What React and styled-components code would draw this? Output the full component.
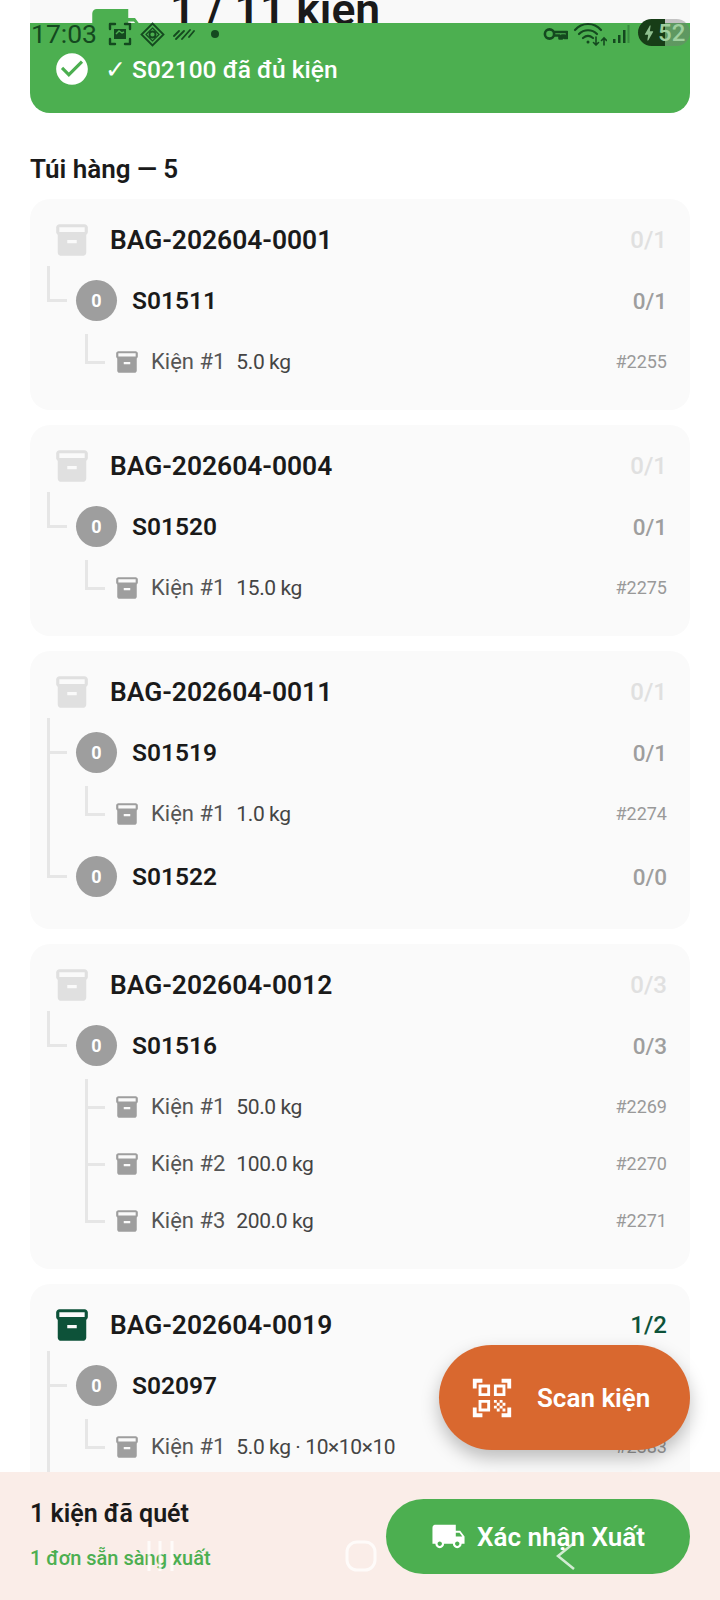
import styled, { createGlobalStyle } from "styled-components"
import { MdInventory2, MdCheckCircle, MdLocalShipping, MdQrCodeScanner, MdBolt } from "react-icons/md"

const bags = [
  {
    code: "BAG-202604-0001", count: "0/1",
    orders: [{ code: "S01511", count: "0/1", parcels: [{ name: "Kiện #1", info: "5.0 kg", id: "#2255" }] }],
  },
  {
    code: "BAG-202604-0004", count: "0/1",
    orders: [{ code: "S01520", count: "0/1", parcels: [{ name: "Kiện #1", info: "15.0 kg", id: "#2275" }] }],
  },
  {
    code: "BAG-202604-0011", count: "0/1",
    orders: [
      { code: "S01519", count: "0/1", parcels: [{ name: "Kiện #1", info: "1.0 kg", id: "#2274" }] },
      { code: "S01522", count: "0/0", parcels: [] },
    ],
  },
  {
    code: "BAG-202604-0012", count: "0/3",
    orders: [
      {
        code: "S01516", count: "0/3",
        parcels: [
          { name: "Kiện #1", info: "50.0 kg", id: "#2269" },
          { name: "Kiện #2", info: "100.0 kg", id: "#2270" },
          { name: "Kiện #3", info: "200.0 kg", id: "#2271" },
        ],
      },
    ],
  },
  {
    code: "BAG-202604-0019", count: "1/2", active: true,
    orders: [
      { code: "S02097", count: "0/1", parcels: [{ name: "Kiện #1", info: "5.0 kg · 10×10×10", id: "#2383" }] },
      { code: "S02100", count: "1/1", parcels: [] },
    ],
  },
]

const GlobalStyle = createGlobalStyle`
  html, body {
    margin: 0;
    padding: 0;
    background: #fff;
  }
  * {
    box-sizing: border-box;
  }
`

const Screen = styled.div`
  position: relative;
  width: 720px;
  height: 1600px;
  overflow: hidden;
  background: #fff;
  font-family: Roboto, "Noto Sans", sans-serif;
  color: #1a1a1a;
`

const Content = styled.main`
  display: flex;
  flex-direction: column;
  padding: 0 30px;
`

const Summary = styled.div`
  display: flex;
  align-items: flex-end;
  gap: 26px;
  height: 23px;
  padding-left: 60px;
  background: #f9f9f9;
  overflow: hidden;
`

const SummaryIcon = styled(MdLocalShipping)`
  flex: none;
  font-size: 54px;
  color: #4caf50;
  margin-bottom: -31px;
`

const SummaryText = styled.div`
  font-size: 44.5px;
  line-height: 52px;
  font-weight: 600;
  white-space: nowrap;
  margin-bottom: -13px;
`

const Toast = styled.div`
  display: flex;
  align-items: flex-start;
  gap: 14px;
  height: 90px;
  padding: 27px 0 0 23px;
  background: #4caf50;
  border-radius: 0 0 20px 20px;
  color: #fff;
  font-size: 24.5px;
  font-weight: 500;
  line-height: 39px;
`

const ToastIcon = styled(MdCheckCircle)`
  flex: none;
  font-size: 38px;
`

const SectionTitle = styled.h2`
  margin: 40px 0 13px;
  font-size: 26px;
  line-height: 33px;
  font-weight: 600;
`

const BagList = styled.div`
  display: flex;
  flex-direction: column;
  gap: 15px;
`

const Bag = styled.section`
  padding: 16px 0 20px;
  background: #fafafa;
  border-radius: 20px;
`

const BagHeader = styled.div`
  display: flex;
  align-items: center;
  height: 50px;
  margin-bottom: 3px;
  padding: 0 23px;
`

const BagIcon = styled(MdInventory2)`
  flex: none;
  font-size: 38px;
  margin-right: 19px;
  color: ${(p) => (p.$active ? "#0d5239" : "#e0e0e0")};
`

const BagCode = styled.div`
  flex: 1;
  font-size: 26.4px;
  font-weight: 600;
`

const BagCount = styled.div`
  font-size: 24px;
  font-weight: 500;
  color: ${(p) => (p.$active ? "#0d5239" : "#e0e0e0")};
`

const OrderBlock = styled.div`
  position: relative;
  & + & {
    margin-top: 2px;
  }
`

const Trunk = styled.span`
  position: absolute;
  left: 17px;
  top: -2px;
  width: 3px;
  height: ${(p) => (p.$last ? "36px" : "calc(100% + 2px)")};
  background: #e6e6e6;
  &::after {
    content: "";
    position: absolute;
    left: 0;
    top: 33px;
    width: 20px;
    height: 3px;
    background: #e6e6e6;
  }
`

const OrderRow = styled.div`
  display: flex;
  align-items: center;
  height: 65px;
  padding: 0 23px 0 46px;
`

const OrderBadge = styled.div`
  flex: none;
  display: flex;
  align-items: center;
  justify-content: center;
  width: 41px;
  height: 41px;
  margin-right: 15px;
  border-radius: 50%;
  background: #9e9e9e;
  color: #fff;
  font-size: 18px;
  font-weight: 700;
`

const OrderCode = styled.div`
  flex: 1;
  font-size: 24.5px;
  font-weight: 600;
`

const OrderCount = styled.div`
  font-size: 22.5px;
  font-weight: 500;
  color: #9e9e9e;
`

const ParcelRow = styled.div`
  position: relative;
  display: flex;
  align-items: center;
  height: 57px;
  padding: 0 23px 0 84px;
`

const Branch = styled.span`
  position: absolute;
  left: 55px;
  top: 1px;
  width: 3px;
  height: ${(p) => (p.$last ? "30px" : "100%")};
  background: #e6e6e6;
  &::after {
    content: "";
    position: absolute;
    left: 0;
    top: 27px;
    width: 20px;
    height: 3px;
    background: #e6e6e6;
  }
`

const ParcelIcon = styled(MdInventory2)`
  flex: none;
  font-size: 26px;
  margin-right: 11px;
  color: #9e9e9e;
`

const ParcelName = styled.span`
  margin-right: 11px;
  font-size: 22px;
  color: #555;
`

const ParcelInfo = styled.span`
  flex: 1;
  font-size: 21px;
  letter-spacing: -0.4px;
  color: #444;
`

const ParcelId = styled.span`
  font-size: 18px;
  color: #999;
`

const ScanButton = styled.button`
  position: absolute;
  right: 30px;
  top: 1345px;
  display: flex;
  align-items: center;
  gap: 22px;
  width: 251px;
  height: 105px;
  padding: 0 0 0 30px;
  border: 0;
  border-radius: 53px;
  background: #d9682f;
  color: #fff;
  font-family: inherit;
  font-size: 26px;
  font-weight: 600;
  box-shadow: 0 8px 18px rgba(0, 0, 0, 0.25);
`

const Footer = styled.footer`
  position: absolute;
  left: 0;
  right: 0;
  bottom: 0;
  display: flex;
  align-items: flex-start;
  justify-content: space-between;
  height: 128px;
  padding: 27px 30px 0;
  background: #faede8;
`

const FooterTitle = styled.div`
  font-size: 25px;
  line-height: 30px;
  font-weight: 600;
`

const FooterNote = styled.div`
  margin-top: 15px;
  font-size: 20px;
  line-height: 28px;
  font-weight: 500;
  color: #4caf50;
`

const ConfirmButton = styled.button`
  display: flex;
  align-items: center;
  justify-content: center;
  gap: 11px;
  width: 304px;
  height: 75px;
  border: 0;
  border-radius: 38px;
  background: #4caf50;
  color: #fff;
  font-family: inherit;
  font-size: 26px;
  font-weight: 600;
`

const StatusBar = styled.div`
  position: absolute;
  left: 31px;
  right: 30px;
  top: 19px;
  display: flex;
  align-items: center;
  height: 27px;
  color: #14491f;
`

const Clock = styled.span`
  font-size: 26.5px;
  line-height: 30px;
  margin: 2px 11px 0 0;
`

const StatusGroup = styled.div`
  display: flex;
  align-items: center;
  gap: ${(p) => p.$gap || 6}px;
  margin-left: ${(p) => (p.$right ? "auto" : "0")};
  padding-top: 3px;
`

const StatusDot = styled.span`
  width: 8px;
  height: 8px;
  margin-left: 8px;
  border-radius: 50%;
  background: currentColor;
`

const Battery = styled.div`
  position: relative;
  display: flex;
  align-items: center;
  width: 52px;
  height: 27px;
  margin: -3px 0 0 3px;
  padding-left: 20px;
  border-radius: 14px;
  background: linear-gradient(90deg, #173d17 0 27px, rgba(120, 120, 120, 0.42) 27px);
  color: #9fd09f;
  font-size: 24px;
  font-weight: 500;
  svg {
    position: absolute;
    left: 1px;
    color: #8fbf8f;
  }
`

const NavOverlay = styled.div`
  position: absolute;
  left: 146px;
  top: 1540px;
  display: flex;
  align-items: center;
  width: 430px;
  height: 32px;
  color: rgba(255, 255, 255, 0.75);
  pointer-events: none;
`

const NavSlot = styled.div`
  display: flex;
  margin-left: ${(p) => p.$offset}px;
`

const ScreenshotIcon = () => (
  <svg width="24" height="24" viewBox="0 0 24 24" fill="none" stroke="currentColor" strokeWidth="2.4">
    <path d="M7 2H2v5M17 2h5v5M7 22H2v-5M17 22h5v-5" strokeLinecap="round" strokeLinejoin="round" />
    <path d="M6 7h12v10H6z" fill="currentColor" stroke="none" />
    <path d="M8 12l3-3 3 2 2-1" stroke="#4caf50" strokeWidth="1.4" />
  </svg>
)

const DiamondIcon = () => (
  <svg width="25" height="25" viewBox="0 0 25 25" fill="none" stroke="currentColor" strokeWidth="1.8">
    <path d="M12.5 1.5l11 11-11 11-11-11z" />
    <circle cx="12.5" cy="12.5" r="3" />
    <path d="M12.5 6l6.5 6.5-6.5 6.5L6 12.5z" strokeWidth="1.2" />
  </svg>
)

const HatchIcon = () => (
  <svg width="22" height="12" viewBox="0 0 22 12" fill="none" stroke="currentColor" strokeWidth="1.8" strokeLinecap="round">
    <path d="M1 8l5-5M3 11l8-8M9 11l8-9M16 9l5-6" />
  </svg>
)

const KeyIcon = () => (
  <svg width="25" height="16" viewBox="0 0 25 16" fill="none" stroke="currentColor" strokeWidth="2.6">
    <circle cx="6.5" cy="8" r="4.6" />
    <path d="M11 6h13v6h-2.5V9.500h-2.500V12.500h-2.500V9.500H11" strokeLinejoin="round" />
  </svg>
)

const WifiIcon = () => (
  <svg width="34" height="24" viewBox="0 0 34 24" fill="none" stroke="currentColor" strokeWidth="2.2" strokeLinecap="round">
    <path d="M2 8c7-8 19-8 26 0M6 12c5-5 13-5 18 0M10 16c3-2.500 7-2.500 10 0" />
    <circle cx="15" cy="20" r="1.500" fill="currentColor" stroke="none" />
    <path d="M23 15v8m-2.500-2.500l2.500 2.500 2.500-2.500M31 23v-7m-2.500 2.500l2.500-2.500 2.500 2.500" strokeWidth="1.600" />
  </svg>
)

const SignalIcon = () => (
  <svg width="18" height="20" viewBox="0 0 18 20" fill="currentColor">
    <rect x="1" y="15" width="2.500" height="4" />
    <rect x="6" y="11" width="2.500" height="8" />
    <rect x="11" y="6" width="2.500" height="13" />
    <rect x="15.500" y="1" width="2" height="18" opacity="0.35" />
  </svg>
)

const NavLines = () => (
  <svg width="30" height="32" viewBox="0 0 30 32" fill="none" stroke="currentColor" strokeWidth="3">
    <path d="M3 1v30M14 1v30M26 1v30" />
  </svg>
)

const NavSquare = () => (
  <svg width="32" height="32" viewBox="0 0 32 32" fill="none" stroke="currentColor" strokeWidth="3">
    <rect x="2" y="2" width="28" height="28" rx="10" />
  </svg>
)

const NavBack = () => (
  <svg width="20" height="30" viewBox="0 0 20 30" fill="none" stroke="currentColor" strokeWidth="2.500">
    <path d="M18 2L2 15l16 13" />
  </svg>
)

const App = () => {
  return (
    <Screen>
      <GlobalStyle />
      <Content>
        <Summary>
          <SummaryIcon />
          <SummaryText>1 / 11 kiện</SummaryText>
        </Summary>
        <Toast>
          <ToastIcon />
          <span>✓ S02100 đã đủ kiện</span>
        </Toast>
        <SectionTitle>Túi hàng — 5</SectionTitle>
        <BagList>
          {bags.map((bag) => (
            <Bag key={bag.code}>
              <BagHeader>
                <BagIcon $active={bag.active} />
                <BagCode>{bag.code}</BagCode>
                <BagCount $active={bag.active}>{bag.count}</BagCount>
              </BagHeader>
              {bag.orders.map((order, i) => (
                <OrderBlock key={order.code}>
                  <Trunk $last={i === bag.orders.length - 1} />
                  <OrderRow>
                    <OrderBadge>0</OrderBadge>
                    <OrderCode>{order.code}</OrderCode>
                    <OrderCount>{order.count}</OrderCount>
                  </OrderRow>
                  {order.parcels.map((parcel, j) => (
                    <ParcelRow key={parcel.id}>
                      <Branch $last={j === order.parcels.length - 1} />
                      <ParcelIcon />
                      <ParcelName>{parcel.name}</ParcelName>
                      <ParcelInfo>{parcel.info}</ParcelInfo>
                      <ParcelId>{parcel.id}</ParcelId>
                    </ParcelRow>
                  ))}
                </OrderBlock>
              ))}
            </Bag>
          ))}
        </BagList>
      </Content>

      <ScanButton>
        <MdQrCodeScanner size={46} />
        Scan kiện
      </ScanButton>

      <Footer>
        <div>
          <FooterTitle>1 kiện đã quét</FooterTitle>
          <FooterNote>1 đơn sẵn sàng xuất</FooterNote>
        </div>
        <ConfirmButton>
          <MdLocalShipping size={35} />
          Xác nhận Xuất
        </ConfirmButton>
      </Footer>

      <StatusBar>
        <Clock>17:03</Clock>
        <StatusGroup $gap={8}>
          <ScreenshotIcon />
          <DiamondIcon />
          <HatchIcon />
          <StatusDot />
        </StatusGroup>
        <StatusGroup $right $gap={5}>
          <KeyIcon />
          <WifiIcon />
          <SignalIcon />
          <Battery>
            <MdBolt size={20} />
            52
          </Battery>
        </StatusGroup>
      </StatusBar>

      <NavOverlay>
        <NavLines />
        <NavSlot $offset={169}><NavSquare /></NavSlot>
        <NavSlot $offset={179}><NavBack /></NavSlot>
      </NavOverlay>
    </Screen>
  )
}

export default App
